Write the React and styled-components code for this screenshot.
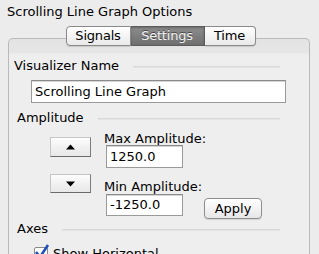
import React from "react";
import styled, { createGlobalStyle } from "styled-components";

const Global = createGlobalStyle`
  html, body { margin: 0; padding: 0; background: #ececec; }
  body { font-family: "DejaVu Sans", "Liberation Sans", sans-serif; color: #000; }
  * { box-sizing: border-box; }
`;

const Window = styled.div`
  width: 319px;
  height: 254px;
  overflow: hidden;
  background: #ececec;
  padding: 0 9px 0 8px;
`;

const Title = styled.div`
  font-size: 13px;
  line-height: 16px;
  padding-top: 4px;
  margin-left: -1px;
  height: 26px;
`;

const TabRow = styled.div`
  display: flex;
  justify-content: center;
  position: relative;
  z-index: 1;
  height: 20px;
  margin-bottom: -8px;
  padding-left: 3px;
`;

const Tab = styled.div`
  width: ${(p) => p.$w}px;
  height: 20px;
  text-align: center;
  font-size: 13px;
  line-height: 18px;
  letter-spacing: -0.2px;
  border: 1px solid ${(p) => (p.$active ? "#5c5c5c" : "#8a8a8a")};
  border-left-width: ${(p) => (p.$first ? 1 : 0)}px;
  border-radius: ${(p) => (p.$first ? "4px 0 0 4px" : p.$last ? "0 4px 4px 0" : "0")};
  background: ${(p) =>
    p.$active
      ? "linear-gradient(#8c8c8c, #6f6f6f)"
      : "linear-gradient(#ffffff, #f4f4f4 50%, #e9e9e9)"};
  color: ${(p) => (p.$active ? "#f2f2f2" : "#000")};
  text-shadow: ${(p) => (p.$active ? "0 -1px 0 #4a4a4a" : "none")};
  box-shadow: ${(p) => (p.$active ? "inset 0 1px 2px rgba(0,0,0,0.25)" : "0 1px 1px rgba(0,0,0,0.12)")};
`;

const Panel = styled.div`
  border: 1px solid #b9b9b9;
  border-radius: 5px 5px 0 0;
  border-bottom: none;
  background: linear-gradient(#e3e3e3 0px, #e6e6e6 14px, #eeeeee 15px);
  height: 240px;
  padding: 19px 0 0 5px;
`;

const SectionHead = styled.div`
  display: flex;
  align-items: center;
  font-size: 13px;
  line-height: 16px;
  margin-left: ${(p) => p.$indent || 0}px;
  margin-top: ${(p) => p.$top || 0}px;
  width: ${(p) => 266 - (p.$indent || 0)}px;
`;

const Rule = styled.div`
  flex: 1;
  height: 2px;
  margin-left: ${(p) => p.$gap}px;
  background: #e4e4e4;
  border-top: 1px solid #d8d8d8;
  margin-top: 1px;
`;

const TextField = styled.div`
  width: ${(p) => p.$w}px;
  height: ${(p) => p.$h}px;
  margin-left: ${(p) => p.$left || 0}px;
  margin-top: ${(p) => p.$top || 0}px;
  background: #fff;
  border: 1px solid #9a9a9a;
  border-top-color: #8a8a8a;
  box-shadow: inset 0 1px 0 #d6d6d6;
  font-size: 13px;
  line-height: ${(p) => p.$h - 2}px;
  padding-left: 3px;
  white-space: nowrap;
  overflow: hidden;
`;

const AmpBody = styled.div`
  display: flex;
  margin-top: 5px;
  margin-left: 36px;
`;

const ArrowCol = styled.div`
  display: flex;
  flex-direction: column;
  padding-top: 6px;
  width: 56px;
`;

const ArrowButton = styled.div`
  width: 41px;
  height: ${(p) => p.$h}px;
  margin-top: ${(p) => p.$top || 0}px;
  display: flex;
  align-items: center;
  justify-content: center;
  background: linear-gradient(#fdfdfd, #f1f1f1 50%, #e8e8e8);
  border: 1px solid #c6c6c6;
  border-right-color: #7c7c7c;
  border-bottom-color: #6a6a6a;
`;

const FieldCol = styled.div`
  display: flex;
  flex-direction: column;
`;

const FieldLabel = styled.div`
  font-size: 13px;
  line-height: 16px;
  margin-top: ${(p) => p.$top || 0}px;
  margin-left: -2px;
`;

const FieldRow = styled.div`
  display: flex;
  align-items: flex-start;
`;

const ApplyButton = styled.div`
  width: 58px;
  height: 21px;
  margin-left: 21px;
  margin-top: 3px;
  border: 1px solid #8e8e8e;
  border-radius: 4px;
  background: linear-gradient(#ffffff, #f3f3f3 50%, #e6e6e6);
  font-size: 13px;
  line-height: 19px;
  text-align: center;
  box-shadow: 0 1px 1px rgba(0,0,0,0.12);
`;

const CheckRow = styled.div`
  display: flex;
  align-items: center;
  margin-left: 20px;
  margin-top: 9px;
  font-size: 13px;
  line-height: 16px;
  gap: 5px;
`;

const CheckBox = styled.div`
  width: 14px;
  height: 14px;
  border: 1px solid #8a8a8a;
  border-radius: 2px;
  background: #fff;
  position: relative;
`;

const Tick = styled.svg`
  position: absolute;
  left: -1px;
  top: -4px;
`;

export default function App() {
  return (
    <>
      <Global />
      <Window>
        <Title>Scrolling Line Graph Options</Title>
        <TabRow>
          <Tab $first $w={65}>Signals</Tab>
          <Tab $active $w={74}>Settings</Tab>
          <Tab $last $w={51}>Time</Tab>
        </TabRow>
        <Panel>
          <SectionHead>
            Visualizer Name
            <Rule $gap={14} />
          </SectionHead>
          <TextField $w={255} $h={23} $left={17} $top={6}>
            Scrolling Line Graph
          </TextField>
          <SectionHead $indent={3} $top={7}>
            Amplitude
            <Rule $gap={14} />
          </SectionHead>
          <AmpBody>
            <ArrowCol>
              <ArrowButton $h={20}>
                <svg width="9" height="6" viewBox="0 0 9 6">
                  <path d="M0 5.5 L4.5 0.5 L9 5.5 Z" fill="#000" />
                </svg>
              </ArrowButton>
              <ArrowButton $h={19} $top={17}>
                <svg width="9" height="6" viewBox="0 0 9 6">
                  <path d="M0 0.5 L4.5 5.5 L9 0.5 Z" fill="#000" />
                </svg>
              </ArrowButton>
            </ArrowCol>
            <FieldCol>
              <FieldLabel>Max Amplitude:</FieldLabel>
              <TextField $w={77} $h={23} $top={-2}>1250.0</TextField>
              <FieldLabel $top={11}>Min Amplitude:</FieldLabel>
              <FieldRow>
                <TextField $w={77} $h={22} $top={-1}>-1250.0</TextField>
                <ApplyButton>Apply</ApplyButton>
              </FieldRow>
            </FieldCol>
          </AmpBody>
          <SectionHead $indent={3} $top={2}>
            Axes
            <Rule $gap={14} />
          </SectionHead>
          <CheckRow>
            <CheckBox>
              <Tick width="16" height="16" viewBox="0 0 16 16">
                <path d="M2 8 L6 13 L14 1" stroke="#1f4fb8" strokeWidth="2.6" fill="none" />
              </Tick>
            </CheckBox>
            Show Horizontal
          </CheckRow>
        </Panel>
      </Window>
    </>
  );
}
